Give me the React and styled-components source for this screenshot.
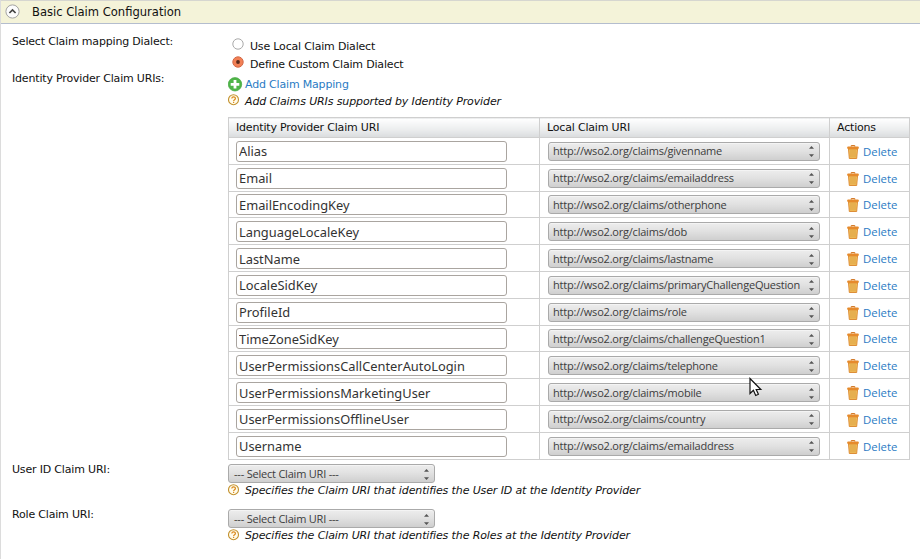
import React from 'react';
import styled, { createGlobalStyle } from 'styled-components';

const Global = createGlobalStyle`
  * { box-sizing: border-box; }
  body { margin: 0; background: #fff; color: #111; font: 11px/16px "DejaVu Sans", sans-serif; letter-spacing: -0.18px; overflow: hidden; }
`;
const Page = styled.main`
  position: relative;
  width: 920px;
  height: 559px;
  border-left: 1px solid #dcdcdc;
`;
const Header = styled.header`
  display: flex;
  align-items: center;
  gap: 12px;
  height: 24px;
  padding: 0 0 1px 4px;
  border-top: 1px solid #d6d6d0;
  border-bottom: 1px solid #b4bdce;
  background: #f4f3d9;
  font: 11.55px/16px "DejaVu Sans", sans-serif;
  letter-spacing: 0;
`;
const Section = styled.section`
  display: grid;
  grid-template-columns: 216px 1fr;
  height: ${p => p.$height}px;
  padding-left: 11px;
`;
const Label = styled.div`
  padding-top: ${p => p.$top}px;
`;
const Body = styled.div`
  padding-top: ${p => p.$top || 0}px;
`;
const RadioRow = styled.label`
  display: flex;
  align-items: flex-start;
  height: 18px;
  gap: 6px;
  padding-left: 4px;
  span { padding-top: 1px; }
`;
const AddLink = styled.a`
  display: flex;
  align-items: center;
  gap: 2px;
  height: 17px;
  color: #2a7bc4;
`;
const Hint = styled.div`
  display: flex;
  gap: 5px;
  height: 16px;
  font-style: italic;
  letter-spacing: -0.12px;
  white-space: nowrap;
  svg { margin-top: 1px; }
  span { padding-top: ${p => p.$drop || 0}px; }
`;
const Table = styled.table`
  width: 681px;
  margin-top: 8px;
  border-collapse: collapse;
  table-layout: fixed;
  th, td { border: 1px solid #cfcfcf; padding: 0 0 0 7px; text-align: left; font-weight: normal; }
  th { height: 20px; line-height: 18px; background: linear-gradient(#fff, #e9ebec 65%, #d9dbdd); }
  td { height: 26.8px; padding-top: 1px; }
`;
const Input = styled.input`
  display: block;
  width: 271px;
  height: 21px;
  padding: 0 2px;
  border: 1px solid #aaa5a0;
  border-radius: 3px;
  outline: 0;
  color: #333;
  background: #fff;
  font: 12.85px/18px "Noto Sans", sans-serif;
  letter-spacing: 0;
`;
const Select = styled.div`
  display: flex;
  align-items: center;
  justify-content: space-between;
  width: ${p => p.$width}px;
  height: 19px;
  padding: 0 4px 0 5px;
  border: 1px solid #aaa;
  border-radius: 3px;
  background: linear-gradient(#ededed, #e2e2e2 45%, #cfcfcf);
  box-shadow: inset 0 1px #f4f4f4;
  color: #3c3c3c;
  font: 11px/16px "Open Sans", sans-serif;
  letter-spacing: -0.21px;
  white-space: nowrap;
  td & { margin-left: 1px; padding-left: 4px; }
`;
const Delete = styled.a`
  display: flex;
  align-items: center;
  gap: 4px;
  padding: 1px 0 0 10px;
  color: #2a7bc4;
  font: 11.4px/16px "Open Sans", sans-serif;
  letter-spacing: 0;
`;
const Cursor = styled.svg`
  position: absolute;
  left: 747px;
  top: 377px;
`;

const Chevron = () => (
  <svg width="15" height="15" viewBox="0 0 15 15">
    <circle cx="7.5" cy="7.5" r="6.6" fill="#fcfcfc" stroke="#a2a2a2" />
    <path d="M4.4 9 7.5 6l3.1 3" fill="none" stroke="#444" strokeWidth="1.7" />
  </svg>
);
const Radio = ({ on }) => (
  <svg width="12" height="13" viewBox="0 0 12 13">
    <circle cx="6" cy="6" r="5.2" fill={on ? '#f28055' : '#fff'} stroke={on ? '#d36a48' : '#aaa'} />
    {on && <circle cx="6" cy="6" r="1.9" fill="#5a2a1c" />}
  </svg>
);
const Plus = () => (
  <svg width="15" height="15" viewBox="0 0 15 15">
    <circle cx="7" cy="7.3" r="6.7" fill="#4fb548" stroke="#45a840" strokeWidth=".7" />
    <path d="M7 3v8.6M2.7 7.3h8.6" stroke="#fff" strokeWidth="2.8" />
  </svg>
);
const Help = () => (
  <svg width="12" height="12" viewBox="0 0 12 12">
    <circle cx="5.5" cy="5.7" r="5" fill="#fffbea" stroke="#c3922f" strokeWidth="1.1" />
    <path d="M3.8 4.6c0-2.4 3.6-2.3 3.6-.2 0 1.3-1.8 1.2-1.8 2.6M5.6 7.8v1.2" fill="none" stroke="#dc8a1c" strokeWidth="1.2" />
  </svg>
);
const Trash = () => (
  <svg width="12" height="14" viewBox="0 0 12 14">
    <path d="M4.2 1.6V.6h3.6v1" fill="none" stroke="#cf6f16" />
    <path d="M1.5 4h9l-.8 9.5H2.3z" fill="#f3bf5c" stroke="#d9852a" strokeWidth=".9" />
    <path d="M4 5v7.5M6 5v7.5M8 5v7.5" stroke="#cf9438" strokeWidth=".7" />
    <rect x=".3" y="1.6" width="11.4" height="2.4" rx=".7" fill="#e68a2c" />
  </svg>
);
const Arrows = () => (
  <svg width="7" height="14" viewBox="0 0 7 14">
    <path d="M1 4.8h5L3.5 2zM1 10.3h5l-2.5 2.8z" fill="#555" />
  </svg>
);

const prefix = 'http://wso2.org/claims/';
const rows = [
  ['Alias', 'givenname'],
  ['Email', 'emailaddress'],
  ['EmailEncodingKey', 'otherphone'],
  ['LanguageLocaleKey', 'dob'],
  ['LastName', 'lastname'],
  ['LocaleSidKey', 'primaryChallengeQuestion'],
  ['ProfileId', 'role'],
  ['TimeZoneSidKey', 'challengeQuestion1'],
  ['UserPermissionsCallCenterAutoLogin', 'telephone'],
  ['UserPermissionsMarketingUser', 'mobile'],
  ['UserPermissionsOfflineUser', 'country'],
  ['Username', 'emailaddress'],
];

export default function App() {
  return (
    <Page>
      <Global />
      <Header><Chevron /><span>Basic Claim Configuration</span></Header>
      <Section $height={47}>
        <Label $top={10}>Select Claim mapping Dialect:</Label>
        <Body $top={14}>
          <RadioRow><Radio /><span>Use Local Claim Dialect</span></RadioRow>
          <RadioRow><Radio on /><span>Define Custom Claim Dialect</span></RadioRow>
        </Body>
      </Section>
      <Section $height={391}>
        <Label $top={0}>Identity Provider Claim URIs:</Label>
        <Body $top={5}>
          <AddLink><Plus />Add Claim Mapping</AddLink>
          <Hint $drop={1}><Help /><span>Add Claims URIs supported by Identity Provider</span></Hint>
          <Table>
            <colgroup><col width="311" /><col width="290" /><col width="80" /></colgroup>
            <thead><tr><th>Identity Provider Claim URI</th><th>Local Claim URI</th><th>Actions</th></tr></thead>
            <tbody>
              {rows.map(([alias, claim]) => (
                <tr key={alias}>
                  <td><Input defaultValue={alias} /></td>
                  <td><Select $width={272}>{prefix + claim}<Arrows /></Select></td>
                  <td><Delete><Trash />Delete</Delete></td>
                </tr>
              ))}
            </tbody>
          </Table>
        </Body>
      </Section>
      <Section $height={45}>
        <Label $top={0}>User ID Claim URI:</Label>
        <Body $top={2}>
          <Select $width={207}>--- Select Claim URI ---<Arrows /></Select>
          <Hint><Help /><span>Specifies the Claim URI that identifies the User ID at the Identity Provider</span></Hint>
        </Body>
      </Section>
      <Section $height={45}>
        <Label $top={0}>Role Claim URI:</Label>
        <Body $top={2}>
          <Select $width={207}>--- Select Claim URI ---<Arrows /></Select>
          <Hint><Help /><span>Specifies the Claim URI that identifies the Roles at the Identity Provider</span></Hint>
        </Body>
      </Section>
      <Cursor width="15" height="21" viewBox="0 0 15 21">
        <path d="M2 1.5v15l3.4-3.2 2.3 5.2 2.7-1.2-2.2-4.8h4.6z" fill="#fff" stroke="#111" strokeWidth="1.2" />
      </Cursor>
    </Page>
  );
}
